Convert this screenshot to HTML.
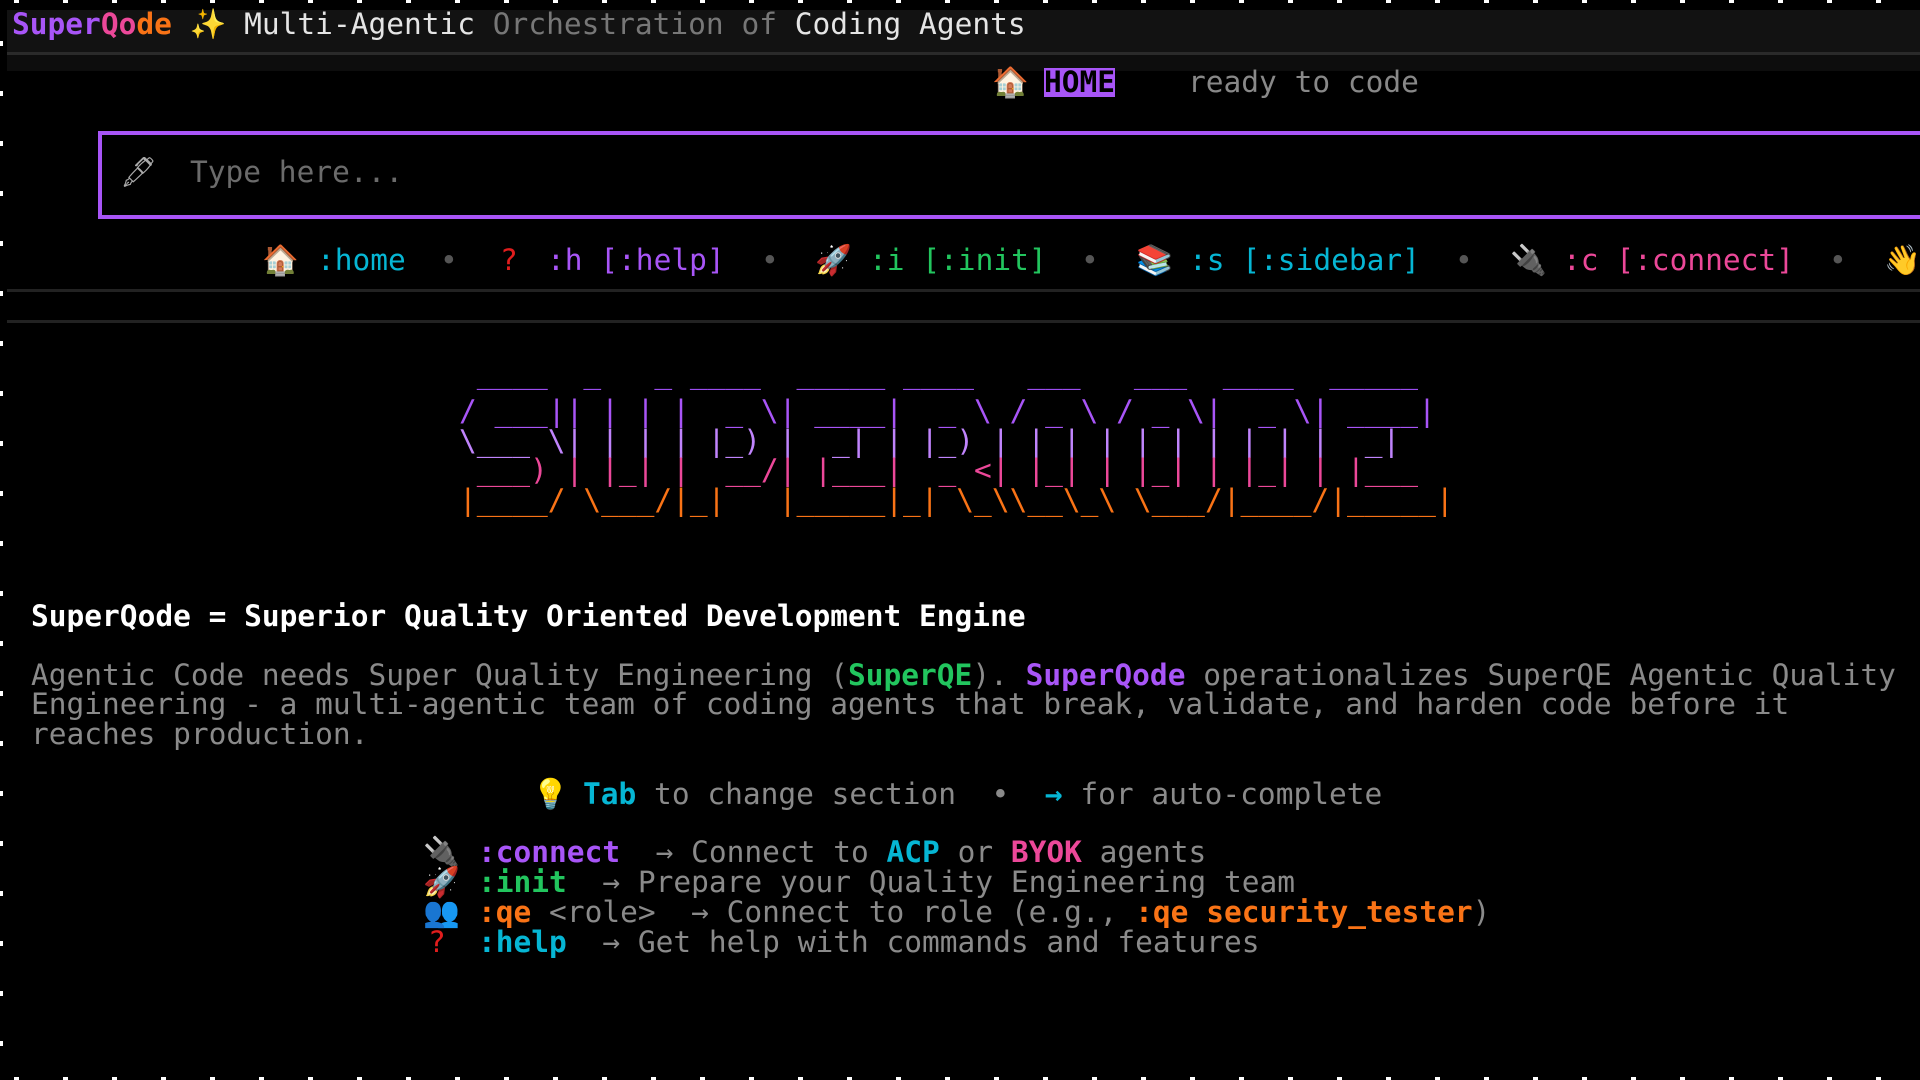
<!DOCTYPE html>
<html><head><meta charset="utf-8"><style>
html,body{margin:0;padding:0;background:#000;width:1920px;height:1080px;overflow:hidden;position:relative;}
body{font-family:"DejaVu Sans Mono","Liberation Mono",monospace;font-size:29.5px;color:#ddd;}
.a{position:absolute;white-space:pre;line-height:29.4px;height:29.4px;}
.topd{position:absolute;left:0;top:0;width:1920px;height:3px;background:repeating-linear-gradient(90deg,transparent 0 14px,#fff 14px 19px,transparent 19px 49px);}
.botd{position:absolute;left:0;top:1077px;width:1920px;height:3px;background:repeating-linear-gradient(90deg,transparent 0 14px,#fff 14px 19px,transparent 19px 49px);}
.leftd{position:absolute;left:0;top:0;width:3px;height:1080px;background:repeating-linear-gradient(180deg,transparent 0 41px,#fff 41px 46px,transparent 46px 50px);}
.b{font-weight:bold}
.g{color:#8a8a8a}
.cy{color:#06b6d4}.pu{color:#a855f7}.gr{color:#22c55e}.pk{color:#ec4899}.or{color:#f97316}.dot{color:#555}
.art{position:absolute;left:459px;top:368px;white-space:pre;line-height:29.4px;}
</style></head><body>
<div style="position:absolute;left:7px;top:10px;width:1913px;height:42px;background:#121212"></div>
<div style="position:absolute;left:7px;top:52px;width:1913px;height:3px;background:#2a2a2a"></div>
<div style="position:absolute;left:7px;top:55px;width:1913px;height:16px;background:#0d0d0d"></div>
<div class="a" style="left:12px;top:10px"><span class="b" style="color:#a855f7">Super</span><span class="b" style="color:#ec4899">Qo</span><span class="b" style="color:#f97316">de</span> <span style="color:#facc15">✨</span> <span style="color:#e5e5e5">Multi-Agentic</span> <span style="color:#777">Orchestration of</span> <span style="color:#e5e5e5">Coding Agents</span></div>

<div class="a" style="left:992px;top:68px">🏠</div>
<div class="a b" style="left:1044px;top:68px;background:#a855f7;color:#000;">HOME</div>
<div class="a g" style="left:1188px;top:68px;color:#888">ready to code</div>

<div style="position:absolute;left:98px;top:131px;width:1830px;height:88px;border:4px solid #a855f7;box-sizing:border-box;border-right:none"></div>
<div class="a" style="left:120px;top:158px;color:#aaa">🖋</div>
<div class="a" style="left:190px;top:158px;color:#6b6b6b">Type here...</div>

<div class="a" style="left:262px;top:246px">🏠</div>
<div class="a cy" style="left:317px;top:246px">:home</div>
<div class="a dot" style="left:440px;top:246px">•</div>
<div class="a" style="left:500px;top:246px;color:#e11d1d">?</div>
<div class="a pu" style="left:547px;top:246px">:h [:help]</div>
<div class="a dot" style="left:761px;top:246px">•</div>
<div class="a" style="left:815px;top:246px">🚀</div>
<div class="a gr" style="left:869px;top:246px">:i [:init]</div>
<div class="a dot" style="left:1081px;top:246px">•</div>
<div class="a" style="left:1136px;top:246px">📚</div>
<div class="a cy" style="left:1189px;top:246px">:s [:sidebar]</div>
<div class="a dot" style="left:1455px;top:246px">•</div>
<div class="a" style="left:1510px;top:246px">🔌</div>
<div class="a pk" style="left:1563px;top:246px">:c [:connect]</div>
<div class="a dot" style="left:1829px;top:246px">•</div>
<div class="a" style="left:1884px;top:246px;color:#facc15">👋</div>

<div style="position:absolute;left:7px;top:289px;width:1913px;height:3px;background:#222"></div>
<div style="position:absolute;left:7px;top:320px;width:1913px;height:3px;background:#222"></div>

<div class="art"><span style="color:#9b4dee;position:relative;top:-9px"> ____  _   _ ____  _____ ____   ___   ___  ____  _____ </span>
<span style="color:#a855f7">/ ___|| | | |  _ \| ____|  _ \ / _ \ / _ \|  _ \| ____|</span>
<span style="color:#c084fc">\___ \| | | | |_) |  _| | |_) | | | | | | | | | |  _|  </span>
<span style="color:#ec4899"> ___) | |_| |  __/| |___|  _ &lt;| |_| | |_| | |_| | |___ </span>
<span style="color:#f97316">|____/ \___/|_|   |_____|_| \_\\__\_\ \___/|____/|_____|</span></div>

<div class="a b" style="left:31px;top:602px;color:#fff">SuperQode = Superior Quality Oriented Development Engine</div>
<div class="a g" style="left:31px;top:661px">Agentic Code needs Super Quality Engineering (<span class="gr b">SuperQE</span>). <span class="pu b">SuperQode</span> operationalizes SuperQE Agentic Quality</div>
<div class="a g" style="left:31px;top:690px">Engineering - a multi-agentic team of coding agents that break, validate, and harden code before it</div>
<div class="a g" style="left:31px;top:720px">reaches production.</div>

<div class="a" style="left:532px;top:780px;color:#fde68a">💡</div>
<div class="a g" style="left:583px;top:780px"><span class="cy b">Tab</span> to change section  •  <span class="cy b">→</span> for auto-complete</div>

<div class="a" style="left:423px;top:838px">🔌</div>
<div class="a g" style="left:478px;top:838px"><span class="pu b">:connect</span>  → Connect to <span class="cy b">ACP</span> or <span class="pk b">BYOK</span> agents</div>
<div class="a" style="left:423px;top:868px">🚀</div>
<div class="a g" style="left:478px;top:868px"><span class="gr b">:init</span>  → Prepare your Quality Engineering team</div>
<div class="a" style="left:423px;top:898px;color:#8ab">👥</div>
<div class="a g" style="left:478px;top:898px"><span class="or b">:qe</span> &lt;role&gt;  → Connect to role (e.g., <span class="or b">:qe security_tester</span>)</div>
<div class="a" style="left:428px;top:928px;color:#e11d1d">?</div>
<div class="a g" style="left:478px;top:928px"><span class="cy b">:help</span>  → Get help with commands and features</div>

<div class="topd"></div><div class="botd"></div><div class="leftd"></div>
</body></html>
